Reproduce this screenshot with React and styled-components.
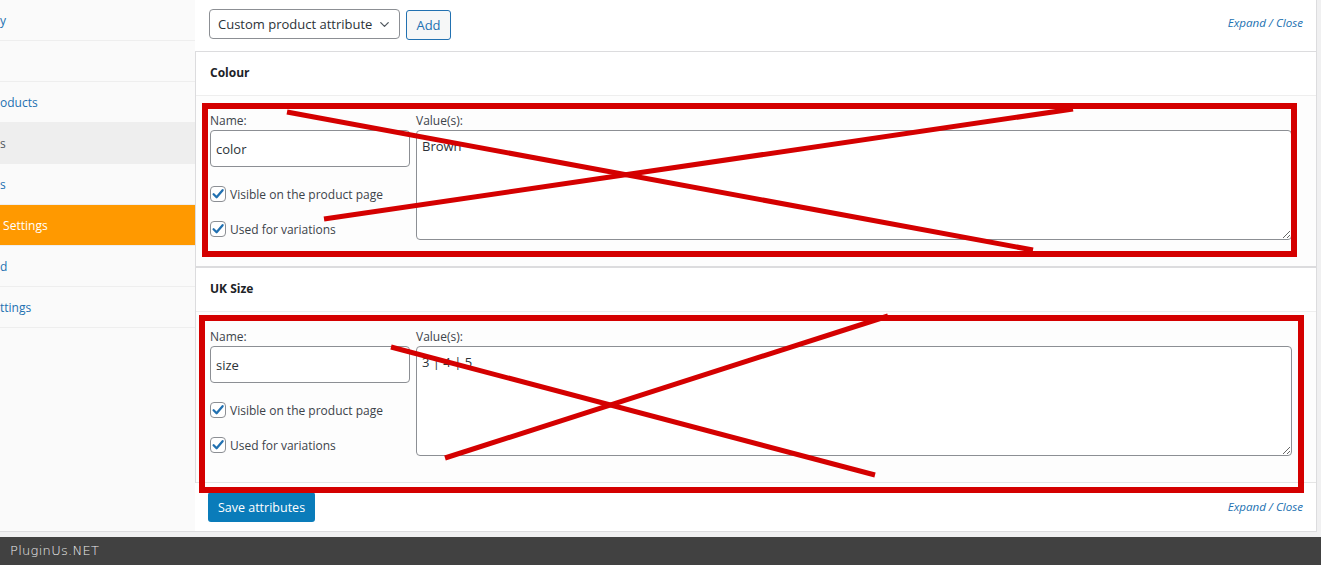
import React from "react";
import styled, { createGlobalStyle } from "styled-components";
import { ChevronDown } from "lucide-react";

const GlobalStyle = createGlobalStyle`
  html, body { margin: 0; padding: 0; background: #f0f0f1; }
  body { font-family: "Open Sans", "Noto Sans", sans-serif; color: #3c434a; }
  * { box-sizing: border-box; }
`;

const Page = styled.div`
  position: relative;
  width: 1321px;
  height: 565px;
  overflow: hidden;
  background: #f0f0f1;
`;

const Panel = styled.div`
  display: flex;
  width: 1317px;
  height: 532px;
  border-bottom: 1px solid #dcdcde;
  background: #fff;
`;

const Sidebar = styled.ul`
  width: 195px;
  flex-shrink: 0;
  margin: 0;
  padding: 0;
  list-style: none;
  background: #fafafa;
`;

const NavItem = styled.li`
  height: 41px;
  line-height: 42px;
  border-bottom: 1px solid #eee;
  font-size: 12px;
  white-space: pre;
  overflow: hidden;
  color: ${(p) => (p.$variant === "active" ? "#fff" : p.$variant === "current" ? "#50575e" : "#2271b1")};
  background: ${(p) => (p.$variant === "active" ? "#ff9900" : p.$variant === "current" ? "#eee" : "transparent")};
`;

const Main = styled.div`
  flex: 1;
  display: flex;
  flex-direction: column;
  border-right: 1px solid #dcdcde;
  background: #fff;
`;

const Toolbar = styled.div`
  display: flex;
  align-items: flex-start;
  height: ${(p) => (p.$bottom ? "47px" : "51px")};
  padding: ${(p) => (p.$bottom ? "9px 13px 0 13px" : "9px 13px 0 14px")};
  gap: 6px;
`;

const SelectBox = styled.div`
  width: 191px;
  height: 30px;
  display: flex;
  align-items: center;
  justify-content: space-between;
  padding: 0 7px 0 8px;
  border: 1px solid #8c8f94;
  border-radius: 4px;
  background: #fff;
  font-size: 13px;
  color: #2c3338;
  svg { color: #50575e; }
`;

const AddButton = styled.button`
  margin-top: 1px;
  width: 45px;
  height: 30px;
  padding: 0;
  border: 1px solid #2271b1;
  border-radius: 3px;
  background: #f6f7f7;
  color: #2271b1;
  font-family: inherit;
  font-size: 13px;
`;

const ExpandClose = styled.div`
  margin-left: auto;
  margin-top: ${(p) => (p.$bottom ? "6px" : "5px")};
  font-size: 11.6px;
  font-style: italic;
  color: #2271b1;
  line-height: 18px;
`;

const Attributes = styled.div`
  border-top: 1px solid #dcdcde;
  border-left: 1px solid #dcdcde;
`;

const Metabox = styled.div`
  border-bottom: ${(p) => (p.$last ? "1px solid #e5e5e5" : "2px solid #dcdcde")};
`;

const MetaHeader = styled.h3`
  margin: 0;
  height: 44px;
  padding-left: 14px;
  border-bottom: 1px solid #eee;
  font-size: 12px;
  font-weight: 700;
  line-height: 42px;
  color: #1d2327;
`;

const MetaBody = styled.div`
  display: flex;
  align-items: flex-start;
  gap: 6px;
  height: 170px;
  padding: 16px 24px 0 14px;
  background: #fdfdfd;
`;

const LeftCol = styled.div`
  width: 200px;
  flex-shrink: 0;
  display: flex;
  flex-direction: column;
`;

const RightCol = styled.div`
  flex: 1;
  display: flex;
  flex-direction: column;
`;

const FieldLabel = styled.label`
  display: block;
  height: 16px;
  line-height: 18px;
  margin-bottom: 2px;
  font-size: 12px;
  color: #3c434a;
`;

const TextInput = styled.input`
  width: 200px;
  height: 37px;
  padding: 0 5px;
  border: 1px solid #8c8f94;
  border-radius: 4px;
  background: #fff;
  font-family: inherit;
  font-size: 13px;
  color: #2c3338;
  outline: none;
`;

const TextArea = styled.textarea`
  width: 100%;
  height: 110px;
  padding: 5px 5px;
  border: 1px solid #8c8f94;
  border-radius: 4px;
  background: #fff;
  font-family: inherit;
  font-size: 13px;
  line-height: 20px;
  color: #2c3338;
  outline: none;
`;

const CheckRow = styled.div`
  display: flex;
  align-items: center;
  gap: 4px;
  height: 24px;
  margin-top: ${(p) => p.$mt || "0"};
  font-size: 12px;
  color: #3c434a;
`;

const CheckBox = styled.span`
  width: 16px;
  height: 16px;
  border: 1px solid #8c8f94;
  border-radius: 4px;
  background: #fff;
  display: flex;
  align-items: center;
  justify-content: center;
`;

const SaveButton = styled.button`
  width: 107px;
  height: 30px;
  padding: 0;
  border: none;
  border-radius: 3px;
  background: #0a7cba;
  color: #fff;
  font-family: inherit;
  font-size: 12.5px;
`;

const Footer = styled.div`
  margin-top: 5px;
  height: 28px;
  line-height: 28px;
  padding-left: 10px;
  background: #414141;
  color: #ececec;
  font-family: "DejaVu Sans", sans-serif;
  font-weight: 200;
  font-size: 13px;
  letter-spacing: 0.3px;
`;

const Overlay = styled.svg`
  position: absolute;
  left: 0;
  top: 0;
  pointer-events: none;
`;

const Check = () => (
  <CheckBox>
    <svg width="14" height="14" viewBox="0 0 14 14">
      <path d="M2.6 7.2 L5.6 10.2 L11.6 3.2" fill="none" stroke="#2271b1" strokeWidth="2.3" strokeLinecap="round" strokeLinejoin="round" />
    </svg>
  </CheckBox>
);

const Attribute = ({ title, name, values, last }) => (
  <Metabox $last={last}>
    <MetaHeader>{title}</MetaHeader>
    <MetaBody>
      <LeftCol>
        <FieldLabel>Name:</FieldLabel>
        <TextInput defaultValue={name} />
        <CheckRow $mt="15px">
          <Check />
          Visible on the product page
        </CheckRow>
        <CheckRow $mt="11px">
          <Check />
          Used for variations
        </CheckRow>
      </LeftCol>
      <RightCol>
        <FieldLabel>Value(s):</FieldLabel>
        <TextArea defaultValue={values} />
      </RightCol>
    </MetaBody>
  </Metabox>
);

const navItems = [
  { text: "y", v: "" },
  { text: "", v: "" },
  { text: "oducts", v: "" },
  { text: "s", v: "current" },
  { text: "s", v: "" },
  { text: " Settings", v: "active" },
  { text: "d", v: "" },
  { text: "ttings", v: "" },
];

export default function App() {
  return (
    <Page>
      <GlobalStyle />
      <Panel>
        <Sidebar>
          {navItems.map((it, i) => (
            <NavItem key={i} $variant={it.v}>
              {it.text}
            </NavItem>
          ))}
        </Sidebar>
        <Main>
          <Toolbar>
            <SelectBox>
              <span>Custom product attribute</span>
              <ChevronDown size={15} strokeWidth={2} />
            </SelectBox>
            <AddButton>Add</AddButton>
            <ExpandClose>Expand / Close</ExpandClose>
          </Toolbar>
          <Attributes>
            <Attribute title="Colour" name="color" values="Brown" />
            <Attribute title="UK Size" name="size" values="3 | 4 | 5" last />
          </Attributes>
          <Toolbar $bottom>
            <SaveButton>Save attributes</SaveButton>
            <ExpandClose $bottom>Expand / Close</ExpandClose>
          </Toolbar>
        </Main>
      </Panel>
      <Footer>PluginUs.NET</Footer>
      <Overlay width="1321" height="565" viewBox="0 0 1321 565">
        <g stroke="#d40000" fill="none">
          <rect x="205" y="106" width="1089" height="148" strokeWidth="6" />
          <line x1="287" y1="112" x2="1033" y2="250" strokeWidth="5" />
          <line x1="324" y1="219" x2="1073" y2="109" strokeWidth="5" />
          <rect x="202" y="318" width="1099" height="172" strokeWidth="6" />
          <line x1="391" y1="347" x2="875" y2="475" strokeWidth="5" />
          <line x1="445" y1="458" x2="888" y2="316" strokeWidth="5" />
        </g>
      </Overlay>
    </Page>
  );
}
